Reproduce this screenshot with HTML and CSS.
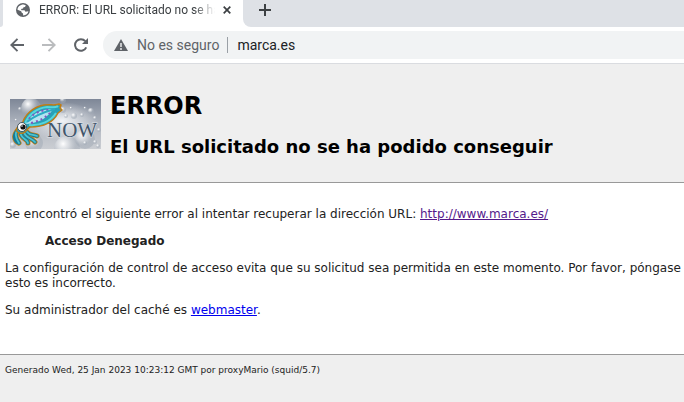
FILE: index.html
```html
<!DOCTYPE html>
<html lang="es">
<head>
<meta charset="utf-8">
<title>ERROR: El URL solicitado no se ha podido conseguir</title>
<link rel="stylesheet" href="styles.css">
</head>
<body>
<div class="tabstrip">
  <div class="tab-gap"></div>
  <div class="tab">
    <svg class="globe" viewBox="0 0 14 14" aria-hidden="true"><circle cx="7" cy="7" r="7" fill="#5f6368"/><path d="M7.500 1.500 9.800 2.200 9 4 7.500 4.300 7 5.600 5 6 5.500 7.200h3l1 1.500 2.900-.5C12 10.500 10 12.400 7.200 12.400L7 10.600 5.600 9.600 5.200 8.200 1.500 6.700C1.600 4 4 1.500 7.500 1.500Z" fill="#fff"/></svg>
    <span class="tab-title">ERROR: El URL solicitado no se ha</span>
    <button class="icon-button close" aria-label="Cerrar"><svg viewBox="0 0 8 8"><path d="M.7.7l6.600 6.600M7.300.7L.7 7.300" stroke="#3c4043" stroke-width="1.700"/></svg></button>
  </div>
  <div class="tab-rest">
    <button class="icon-button plus" aria-label="Nueva pestaña"><svg viewBox="0 0 12 12"><path d="M6 0v12M0 6h12" stroke="#3c4043" stroke-width="2"/></svg></button>
  </div>
</div>
<nav class="toolbar">
  <button class="icon-button nav" aria-label="Atrás"><svg viewBox="0 0 14 14"><path d="M14 7H1.500M7.500.8L1.300 7l6.200 6.200" fill="none" stroke="#5f6368" stroke-width="1.900"/></svg></button>
  <button class="icon-button nav" aria-label="Adelante"><svg viewBox="0 0 14 14"><path d="M0 7h12.500M6.500.8L12.700 7l-6.200 6.200" fill="none" stroke="#babcbe" stroke-width="1.900"/></svg></button>
  <button class="icon-button nav" aria-label="Recargar"><svg viewBox="0 0 14 14"><path d="M12.200 9.300A5.800 5.800 0 1 1 11.300 3.200" fill="none" stroke="#5f6368" stroke-width="2"/><path d="M14 0v6H8Z" fill="#5f6368"/></svg></button>
  <div class="omnibox">
    <svg class="warning" viewBox="0 0 14 12" aria-hidden="true"><path d="M7 0l7 12H0Z" fill="#5f6368"/><path d="M7 4v4M7 9v2" stroke="#f1f3f4" stroke-width="1.400"/></svg>
    <label class="security" for="address">No es seguro</label>
    <input class="address" id="address" type="text" value="marca.es">
  </div>
</nav>
<header class="titles">
  <svg class="logo" viewBox="0 0 91 50" role="img" aria-label="Squid Now">
    <defs>
      <linearGradient id="sky" x2="0" y2="1"><stop offset="0" stop-color="#7e8797"/><stop offset=".5" stop-color="#b0b6c0"/><stop offset="1" stop-color="#cbced3"/></linearGradient>
      <radialGradient id="glow"><stop offset="0" stop-color="#f1f3f6"/><stop offset="1" stop-color="#f1f3f6" stop-opacity="0"/></radialGradient>
      <radialGradient id="bubble" cx=".35" cy=".3"><stop offset="0" stop-color="#fff"/><stop offset=".45" stop-color="#e1e4e8" stop-opacity=".7"/><stop offset="1" stop-color="#a0a9b5" stop-opacity=".5"/></radialGradient>
    </defs>
    <path d="M0 0h91v50H0Z" fill="url(#sky)"/>
    <ellipse cx="52" cy="22" rx="36" ry="19" fill="url(#glow)"/>
    <g fill="url(#bubble)">
      <circle cx="21" cy="9" r="10"/><circle cx="57" cy="50" r="13"/><circle cx="24" cy="44" r="9"/><circle cx="75" cy="40" r="10"/>
      <circle cx="64" cy="17" r="3"/><circle cx="72" cy="16" r="2"/><circle cx="81" cy="12" r="3"/><circle cx="56" cy="17" r="2"/><circle cx="53" cy="11" r="3"/><circle cx="85" cy="19" r="2"/><circle cx="75" cy="9" r="1.500"/><circle cx="61" cy="9" r="1.500"/><circle cx="85" cy="43" r="2"/><circle cx="75" cy="44" r="2"/><circle cx="89" cy="31" r="2"/><circle cx="10" cy="10" r="2"/><circle cx="6" cy="21" r="1.500"/><circle cx="53" cy="1" r="3"/><circle cx="88" cy="47" r="2"/><circle cx="3" cy="46" r="3"/>
    </g>
    <text class="logo-text" x="37" y="38">NOW</text>
    <g fill="none" stroke-linecap="round" stroke-linejoin="round">
      <path d="M8 31C3 35 7 41 9 44M11 33c-2 6 7 7 7 11M14 33c1 6 8 6 11 10M17 33c3 4 6 2 10 4M7 32c-5 6-1 11 2 12" stroke="#bd8420" stroke-width="5"/>
      <path d="M8 31C3 35 7 41 9 44M11 33c-2 6 7 7 7 11M14 33c1 6 8 6 11 10M17 33c3 4 6 2 10 4M7 32c-5 6-1 11 2 12" stroke="#167996" stroke-width="3.500"/>
      <path d="M8 31C3 35 7 41 9 44M11 33c-2 6 7 7 7 11M14 33c1 6 8 6 11 10M17 33c3 4 6 2 10 4" stroke="#4bc3d0" stroke-width="1.800"/>
    </g>
    <path d="M12 26C14 16 23 8 34 6c6-1 11 1 15-1l2 1-1 3 2 2-4 3C43 24 33 28 20 28c-4 2-3 5-7 6-5 1-8-2-6-5 1-2 3-3 5-3Z" fill="#27a1b7" stroke="#c07d15" stroke-width="1.500" stroke-linejoin="round"/>
    <path d="M15 25C18 15 28 9 37 8c5 0 9 1 11-1M19 26c12 1 22-4 27-12" fill="none" stroke="#56d5dc" stroke-width="2"/>
    <path d="M16 25C20 15 32 10 43 10c-5 8-13 14-27 15Z" fill="#b3e4f1"/>
    <path d="M19 20c5-6 12-9 20-9M21 24c8-2 14-5 19-10" fill="none" stroke="#8158bf" stroke-width="2" stroke-dasharray="2 3"/>
    <path d="M17 23C24 17 34 13 45 10" fill="none" stroke="#2baac3" stroke-width="2"/>
    <circle cx="12" cy="28" r="4.500" fill="#fff" stroke="#42545d"/><circle cx="13" cy="28" r="2.600" fill="#111"/><circle cx="12" cy="27" r=".8" fill="#fff"/>
  </svg>
  <div>
    <h1>ERROR</h1>
    <h2>El URL solicitado no se ha podido conseguir</h2>
  </div>
</header>
<main class="content">
  <p>Se encontró el siguiente error al intentar recuperar la dirección URL: <a class="visited" href="http://www.marca.es/">http://www.marca.es/</a></p>
  <blockquote>Acceso Denegado</blockquote>
  <p>La configuración de control de acceso evita que su solicitud sea permitida en este momento. Por favor, póngase<br>esto es incorrecto.</p>
  <p>Su administrador del caché es <a href="mailto:webmaster">webmaster</a>.</p>
</main>
<footer class="footer">Generado Wed, 25 Jan 2023 10:23:12 GMT por proxyMario (squid/5.7)</footer>
</body>
</html>
```

FILE: styles.css
```css
* { box-sizing: border-box; }
html { height: 100%; }
body {
  margin: 0;
  min-height: 100%;
  display: flex;
  flex-direction: column;
  background: #efefef;
  color: #222;
  font: 12px/15px Verdana, "DejaVu Sans", sans-serif;
  overflow-x: hidden;
}
.icon-button {
  display: flex;
  flex: none;
  padding: 0;
  border: 0;
  background: none;
}
.icon-button svg { width: 100%; height: 100%; }
.tabstrip { display: flex; height: 27px; background: #fff; }
.tab-gap { width: 3px; background: #dee1e6; border-bottom-right-radius: 6px; }
.tab {
  display: flex;
  align-items: center;
  width: 240px;
  padding: 0 12px 7px 13px;
  color: #3c4043;
  font: 12px/16px Roboto, sans-serif;
}
.globe { flex: none; width: 14px; height: 14px; margin-right: 9px; }
.tab-title {
  flex: 1;
  min-width: 0;
  white-space: nowrap;
  mask-image: linear-gradient(to right, #000 88%, transparent);
}
.close { width: 8px; height: 8px; margin-left: 8px; }
.tab-rest {
  flex: 1;
  padding: 4px 16px;
  background: #dee1e6;
  border-bottom-left-radius: 8px;
}
.plus { width: 12px; height: 12px; }
.toolbar {
  display: flex;
  align-items: center;
  gap: 18px;
  height: 37px;
  padding-left: 10px;
  background: #fff;
  border-bottom: 1px solid #dadce0;
}
.nav { width: 14px; height: 14px; }
.omnibox {
  display: flex;
  flex: 1;
  align-items: center;
  height: 28px;
  margin-left: -3px;
  padding-left: 11px;
  border-radius: 14px 0 0 14px;
  background: #f1f3f4;
  font: 14px/16px Roboto, sans-serif;
}
.warning { width: 14px; height: 12px; margin-right: 9px; }
.security {
  padding-right: 8px;
  border-right: 1px solid #9aa0a6;
  color: #5f6368;
}
.address {
  flex: 1;
  min-width: 0;
  padding: 0 0 0 9px;
  border: 0;
  background: none;
  color: #202124;
  font: inherit;
}
.titles {
  display: flex;
  align-items: center;
  gap: 9px;
  padding: 26px 10px 23px;
  border-bottom: 1px solid #999;
  color: #000;
  white-space: nowrap;
}
.logo { flex: none; width: 91px; height: 50px; margin-bottom: 2px; }
.logo-text {
  font: 21px "Liberation Serif", serif;
  fill: #42566b;
  stroke: #dfe3e9;
  stroke-width: 1px;
  paint-order: stroke;
}
h1, h2 { margin: 0; font-weight: bold; }
h1 { margin-bottom: 13px; font-size: 24px; line-height: 32px; }
h2 { font-size: 18px; line-height: 24px; }
.content { padding: 24px 5px; background: #fff; white-space: nowrap; }
p { margin: 0 0 12px; }
blockquote { margin: 12px 40px; font-weight: bold; }
.visited { color: #551a8b; }
a { color: #00e; }
.footer {
  flex: 1;
  padding: 8px 5px;
  border-top: 1px solid #999;
  font-size: 9px;
}
```
